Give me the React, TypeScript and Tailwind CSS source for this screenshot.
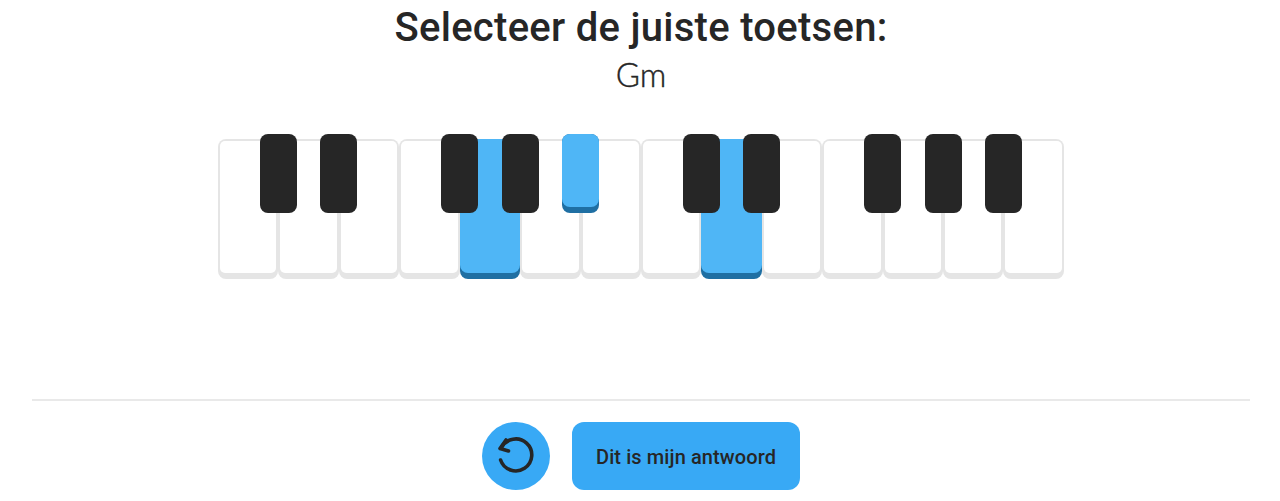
function BlackKey({ active }: { active?: boolean }) {
  return active ? (
    <div className="absolute top-[-5px] right-[-18.5px] z-10 h-[79px] w-[37px] rounded-[8px] bg-[#1f6fa3]">
      <div className="h-[73px] rounded-[8px] bg-[#4fb6f6]" />
    </div>
  ) : (
    <div className="absolute top-[-5px] right-[-18.5px] z-10 h-[79px] w-[37px] rounded-[8px] bg-[#262626]" />
  );
}

function WhiteKey({ active, black, blackActive }: { active?: boolean; black?: boolean; blackActive?: boolean }) {
  return (
    <div className="relative h-[140px] flex-1">
      {active ? (
        <div className="h-full rounded-[8px] bg-[#1f6fa3]">
          <div className="h-[134px] rounded-[8px] bg-[#4fb6f6]" />
        </div>
      ) : (
        <div className="h-full rounded-[8px] bg-[#e5e5e5] px-[2px] pt-[2px] pb-[6px]">
          <div className="h-full rounded-[5px] bg-white" />
        </div>
      )}
      {black && <BlackKey active={blackActive} />}
    </div>
  );
}

function ReplayIcon() {
  return (
    <svg width="50" height="50" viewBox="1 1 50 50" fill="none" stroke="#262626" strokeWidth="3.6" strokeLinecap="round" strokeLinejoin="round">
      <path d="M10.6 30A16 16 0 1 0 11.6 17.5" />
      <path d="M16 10L10 18.5L18.5 21" />
    </svg>
  );
}

export default function App() {
  const blacks = [0, 1, 3, 4, 5, 7, 8, 10, 11, 12];
  return (
    <div className="flex h-[501px] flex-col items-center bg-white pl-[2px] font-['Roboto',sans-serif] text-[#262626]">
      <h1 className="mt-[4px] text-[40px] leading-[48px] font-medium tracking-[0.28px]">Selecteer de juiste toetsen:</h1>
      <p className="mt-[-1px] font-['Lato',sans-serif] text-[33px] leading-[46px] font-light [-webkit-text-stroke:0.4px_#262626]">Gm</p>
      <div className="mt-[42px] flex w-[846px]">
        {Array.from({ length: 14 }).map((_, i) => (
          <WhiteKey key={i} active={i === 4 || i === 8} black={blacks.includes(i)} blackActive={i === 5} />
        ))}
      </div>
      <div className="mt-[120px] h-[2px] w-[1218px] bg-[#e9e9e9]" />
      <div className="mt-[21px] flex items-center gap-[22px]">
        <button className="flex h-[68px] w-[68px] items-center justify-center rounded-full bg-[#38a9f5]">
          <ReplayIcon />
        </button>
        <button className="flex h-[68px] w-[228px] items-center justify-center rounded-[12px] bg-[#38a9f5] pt-[2px] text-[20px] font-medium tracking-[0.1px]">
          Dit is mijn antwoord
        </button>
      </div>
    </div>
  );
}
